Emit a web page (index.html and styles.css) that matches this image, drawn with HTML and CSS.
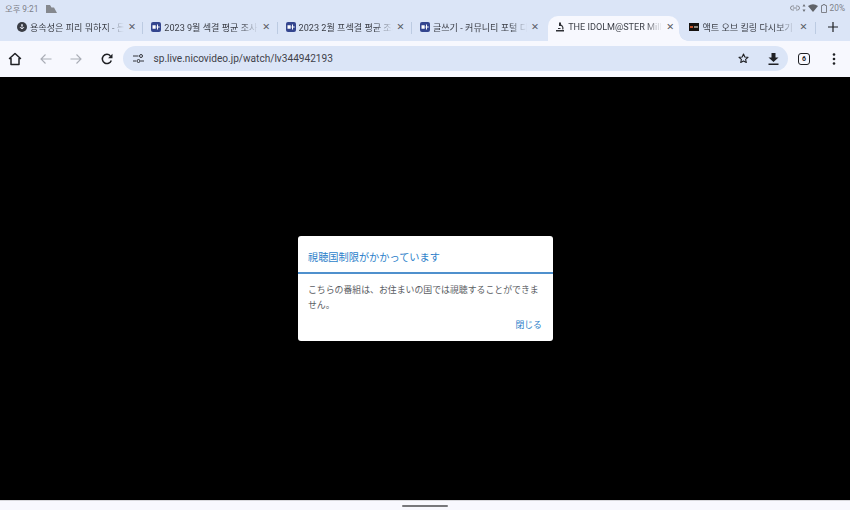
FILE: index.html
```html
<!DOCTYPE html>
<html lang="ko">
<head>
<meta charset="utf-8">
<title>THE IDOLM@STER</title>
<link rel="stylesheet" href="styles.css">
</head>
<body>
<div class="chrome-top">
  <div class="status">
    <span class="time">오후 9:21</span>
    <svg class="cloud" width="11" height="8" viewBox="0 0 11 8"><path d="M0 8V0h4l1.500 2.500h2.500L11 8z" fill="#85888e"/></svg>
    <span class="status-right">
      <svg width="10" height="6" viewBox="0 0 10 6"><path d="M4 1H2.500a2 2 0 0 0 0 4H4M6 1h1.500a2 2 0 0 1 0 4H6M3 3h4" fill="none" stroke="#8a8d94" stroke-width="1"/></svg>
      <svg width="4" height="8" viewBox="0 0 4 8"><path d="M2 0l1.500 2.500h-3zM2 8L.5 5.500h3z" fill="#6d7077"/></svg>
      <svg width="10" height="8" viewBox="0 0 10 8"><path d="M0 2Q5-1.500 10 2L5 8z" fill="#5f6268"/></svg>
      <svg class="battery" width="6" height="9" viewBox="0 0 6 9"><path d="M2 .5h2v1h1.500v7h-5v-7H2z" fill="none" stroke="#7f828a" stroke-width="1"/></svg>
      <span class="pct">20%</span>
    </span>
  </div>
  <div class="tabstrip">
    <div class="tab">
      <svg class="fav" width="10" height="10" viewBox="0 0 10 10"><circle cx="5" cy="5" r="5" fill="#3a3d45"/><path d="M5 2v5M3 5q2 3.500 4 0M4 3.200h2" stroke="#e6e9f2" stroke-width=".9" fill="none"/></svg>
      <span class="title">용속성은 피리 뭐하지 - 든든</span>
      <span class="close">✕</span>
    </div>
    <div class="tab">
      <svg class="fav" width="10" height="10" viewBox="0 0 10 10"><rect width="10" height="10" rx="2" fill="#34468f"/><path d="M1.500 3.200h3.200v3.600H1.500zM5.500 4.500h3.200v1H5.500zM6 2.500h1v5H6z" fill="#fff"/></svg>
      <span class="title">2023 9월 섹결 평균 조사 결과</span>
      <span class="close">✕</span>
    </div>
    <div class="tab">
      <svg class="fav" width="10" height="10" viewBox="0 0 10 10"><rect width="10" height="10" rx="2" fill="#34468f"/><path d="M1.500 3.200h3.200v3.600H1.500zM5.500 4.500h3.200v1H5.500zM6 2.500h1v5H6z" fill="#fff"/></svg>
      <span class="title">2023 2월 프섹결 평균 조사 결과</span>
      <span class="close">✕</span>
    </div>
    <div class="tab">
      <svg class="fav" width="10" height="10" viewBox="0 0 10 10"><rect width="10" height="10" rx="2" fill="#34468f"/><path d="M1.500 3.200h3.200v3.600H1.500zM5.500 4.500h3.200v1H5.500zM6 2.500h1v5H6z" fill="#fff"/></svg>
      <span class="title">글쓰기 - 커뮤니티 포털 디시인사이드</span>
      <span class="close">✕</span>
    </div>
    <div class="tab active">
      <svg class="fav" width="10" height="10" viewBox="0 0 10 10"><path d="M4 .5h2v3.500H4z" fill="#2f3136"/><path d="M6 3q2.500 1.500 1.800 4.500M3 6.500h2.500" fill="none" stroke="#2f3136" stroke-width="1.100"/><path d="M1 8h8v1.500H1z" fill="#2f3136"/></svg>
      <span class="title">THE IDOLM@STER Million Live</span>
      <span class="close">✕</span>
    </div>
    <div class="tab last">
      <svg class="fav" width="10" height="10" viewBox="0 0 10 10"><rect y="1" width="10" height="8" fill="#16120f"/><rect x="1" y="4" width="3" height="2" fill="#c4532a"/><rect x="5" y="4" width="4" height="2" fill="#8f8a80"/></svg>
      <span class="title">액트 오브 킬링 다시보기 - 무료</span>
      <span class="close">✕</span>
    </div>
    <span class="newtab">
      <svg width="10" height="10" viewBox="0 0 10 10"><path d="M5 0v10M0 5h10" stroke="#1f2024" stroke-width="1.200"/></svg>
    </span>
  </div>
</div>
<div class="toolbar">
  <svg class="tool home" width="14" height="14" viewBox="0 0 14 14"><path d="M7 1.500L1.500 6.500H3v6h8v-6h1.500z" fill="none" stroke="#1f2024" stroke-width="1.500" stroke-linejoin="round"/></svg>
  <svg class="tool back" width="12" height="12" viewBox="0 0 12 12"><path d="M11.500 6H1M5.500 1.500L1 6l4.500 4.500" fill="none" stroke="#a9adb6" stroke-width="1.100"/></svg>
  <svg class="tool fwd" width="12" height="12" viewBox="0 0 12 12"><path d="M.5 6H11M6.500 1.500L11 6l-4.500 4.500" fill="none" stroke="#a9adb6" stroke-width="1.100"/></svg>
  <svg class="tool reload" width="12" height="12" viewBox="0 0 12 12"><path d="M10.300 7.500A4.600 4.600 0 1 1 9.400 2.900" fill="none" stroke="#1f2024" stroke-width="1.500"/><path d="M11.500.8v4.400H7.100z" fill="#1f2024"/></svg>
  <div class="omnibox">
    <svg class="tune" width="11" height="9" viewBox="0 0 11 9"><path d="M0 2h5.500M0 7h3M7.500 7H11" stroke="#33353a" stroke-width="1"/><circle cx="8" cy="2" r="1.500" fill="none" stroke="#33353a"/><circle cx="5.500" cy="7" r="1.500" fill="none" stroke="#33353a"/></svg>
    <span class="url">sp.live.nicovideo.jp/watch/lv344942193</span>
    <svg class="star" width="11" height="11" viewBox="0 0 11 11"><path d="M5.500 1l1.300 3 3.200.3-2.400 2.100.7 3.100-2.800-1.600-2.800 1.600.7-3.100L1 4.300 4.200 4z" fill="none" stroke="#1f2024" stroke-width="1.100" stroke-linejoin="round"/></svg>
    <svg class="download" width="11" height="12" viewBox="0 0 11 12"><path d="M3.500 0h4v4.500h3L5.500 9 .5 4.500h3zM.5 10.500h10V12H.5z" fill="#1f2024"/></svg>
  </div>
  <span class="tabcount">6</span>
  <svg class="menu" width="4" height="12" viewBox="0 0 4 12"><circle cx="2" cy="1.500" r="1.300" fill="#1f2024"/><circle cx="2" cy="6" r="1.300" fill="#1f2024"/><circle cx="2" cy="10.500" r="1.300" fill="#1f2024"/></svg>
</div>
<main class="stage">
  <div class="dialog">
    <h1 class="dialog-title">視聴国制限がかかっています</h1>
    <p class="dialog-body">こちらの番組は、お住まいの国では視聴することができません。</p>
    <div class="dialog-actions"><span class="dialog-close">閉じる</span></div>
  </div>
</main>
<div class="navbar"><span class="handle"></span></div>
</body>
</html>
```

FILE: styles.css
```css
* { box-sizing: border-box; }
html, body { margin: 0; height: 100%; }
body {
  width: 850px;
  height: 510px;
  overflow: hidden;
  display: flex;
  flex-direction: column;
  background: #000;
  font-family: Roboto, "Noto Sans CJK KR", "Noto Sans CJK JP", sans-serif;
}
.chrome-top {
  height: 41px;
  flex: none;
  background: #dbe5f7;
}
.status {
  height: 16px;
  display: flex;
  align-items: center;
  padding: 0 5px;
  font-size: 8.300px;
  color: #7d8087;
}
.time { margin-right: 8px; }
.cloud { margin-top: 1px; }
.status-right {
  margin-left: auto;
  display: flex;
  align-items: center;
  gap: 2px;
}
.battery { margin-left: 1px; }
.pct { margin-left: 1px; }
.tabstrip {
  height: 25px;
  display: flex;
  padding-left: 8px;
}
.tab {
  position: relative;
  width: 134.300px;
  flex: none;
  display: flex;
  align-items: center;
  padding: 0 4.300px 3px 9px;
}
.tab::after {
  content: "";
  position: absolute;
  right: -1px;
  top: 6px;
  height: 12px;
  width: 1px;
  background: #bccbe2;
}
.tab:nth-child(4)::after,
.tab.active::after { display: none; }
.tab.active {
  width: 131.300px;
  margin-left: 3px;
  background: #f7f8fe;
  border-radius: 10px 10px 0 0;
  padding: 0 3.300px 3px 7px;
}
.tab.active::before {
  content: "";
  position: absolute;
  right: -9px;
  bottom: 0;
  width: 9px;
  height: 9px;
  background: radial-gradient(circle at 100% 0, transparent 8.500px, #f7f8fe 9px);
}
.tab.last {
  width: 135.500px;
  padding-left: 10px;
  padding-right: 5.500px;
}
.fav { flex: none; }
.title {
  flex: 1;
  min-width: 0;
  margin-left: 3px;
  white-space: nowrap;
  overflow: hidden;
  font-size: 9.100px;
  color: #3b3e46;
  -webkit-mask-image: linear-gradient(90deg, #000 80%, transparent 98%);
  mask-image: linear-gradient(90deg, #000 80%, transparent 98%);
}
.close {
  flex: none;
  width: 12px;
  text-align: center;
  font-size: 9.500px;
  line-height: 12px;
  color: #5b5e66;
  font-family: "DejaVu Sans", sans-serif;
}
.newtab {
  flex: none;
  width: 37px;
  display: flex;
  align-items: center;
  justify-content: center;
  padding-bottom: 3px;
}
.toolbar {
  height: 36px;
  flex: none;
  display: flex;
  align-items: center;
  background: #f7f8fe;
}
.tool { flex: none; }
.home { margin-left: 8px; }
.back { margin-left: 18px; }
.fwd { margin-left: 18px; }
.reload { margin-left: 19px; }
.omnibox {
  margin-left: 10px;
  width: 665px;
  height: 25px;
  margin-top: -1px;
  border-radius: 13px;
  background: #dbe5f7;
  display: flex;
  align-items: center;
  padding: 0 9.500px;
  flex: none;
}
.tune { flex: none; }
.url {
  margin-left: 10px;
  font-size: 10.120px;
  color: #3f424a;
}
.star { margin-left: auto; }
.download { margin-left: 19px; }
.tabcount {
  flex: none;
  margin-left: 10px;
  width: 12px;
  height: 12px;
  border: 1.300px solid #1f2024;
  border-radius: 3px;
  display: flex;
  align-items: center;
  justify-content: center;
  font-size: 7px;
  font-weight: 700;
  color: #1f2024;
}
.menu { margin-left: 22px; flex: none; }
.stage {
  flex: 1;
  min-height: 0;
  background: #000;
  display: flex;
  align-items: flex-start;
  justify-content: center;
  padding-top: 159px;
}
.dialog {
  width: 255px;
  height: 105px;
  background: #fff;
  border-radius: 3px;
  margin-left: 1px;
}
.dialog-title {
  margin: 0;
  height: 38px;
  padding: 13px 10px 0;
  border-bottom: 2px solid #4f90cd;
  font-size: 10.200px;
  line-height: 15px;
  font-weight: 400;
  color: #2c7fca;
  font-family: "Noto Sans CJK JP", sans-serif;
}
.dialog-body {
  margin: 0;
  padding: 8px 10px 0;
  font-size: 8.900px;
  line-height: 15px;
  color: #5a5d63;
  font-family: "Noto Sans CJK JP", sans-serif;
}
.dialog-actions {
  display: flex;
  justify-content: flex-end;
  padding: 7px 11px 0;
}
.dialog-close {
  font-size: 8.900px;
  line-height: 12px;
  color: #2c7fca;
  font-family: "Noto Sans CJK JP", sans-serif;
}
.navbar {
  height: 10px;
  flex: none;
  background: #f8f8fe;
  border-top: 1px solid #d8d8dc;
  display: flex;
  justify-content: center;
  padding-top: 4px;
}
.handle {
  width: 46px;
  height: 2px;
  background: #77777b;
  border-radius: 1px;
}
```
